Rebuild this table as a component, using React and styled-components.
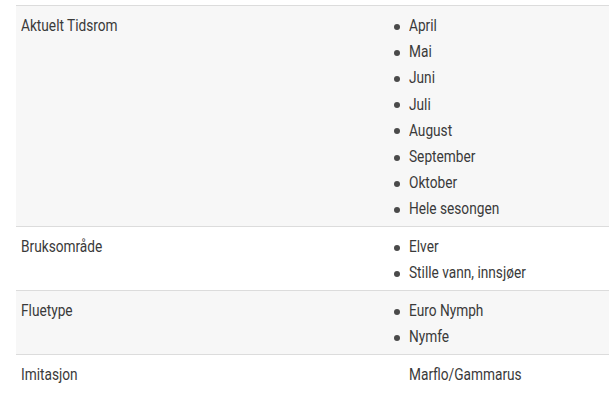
import React from 'react';
import styled, { createGlobalStyle } from 'styled-components';

const GlobalStyle = createGlobalStyle`
  html, body {
    margin: 0;
    padding: 0;
    background: #ffffff;
  }
  body {
    font-family: Roboto, "Liberation Sans", sans-serif;
    color: #3a3a3a;
  }
`;

const specs = [
  {
    label: 'Aktuelt Tidsrom',
    values: ['April', 'Mai', 'Juni', 'Juli', 'August', 'September', 'Oktober', 'Hele sesongen'],
  },
  { label: 'Bruksområde', values: ['Elver', 'Stille vann, innsjøer'] },
  { label: 'Fluetype', values: ['Euro Nymph', 'Nymfe'] },
  { label: 'Imitasjon', text: 'Marflo/Gammarus' },
];

const SpecTable = ({ rows }) => (
  <Table>
    {rows.map((row, i) => (
      <Row key={row.label} striped={i % 2 === 0}>
        <LabelCell>
          <Narrow>{row.label}</Narrow>
        </LabelCell>
        <ValueCell>
          {row.values ? (
            <List>
              {row.values.map((v) => (
                <Item key={v}>
                  <Narrow>{v}</Narrow>
                </Item>
              ))}
            </List>
          ) : (
            <Narrow>{row.text}</Narrow>
          )}
        </ValueCell>
      </Row>
    ))}
  </Table>
);

const App = () => (
  <>
    <GlobalStyle />
    <Page>
      <SpecTable rows={specs} />
    </Page>
  </>
);

const Page = styled.div`
  padding: 5px 1px 0 16px;
`;

const Table = styled.div`
  display: flex;
  flex-direction: column;
  border-top: 1px solid #dcdcdc;
`;

const Row = styled.div`
  display: grid;
  grid-template-columns: 376px 1fr;
  background-color: ${(p) => (p.striped ? '#f7f7f7' : '#ffffff')};
  border-bottom: 1px solid #dcdcdc;
  padding: 7px 0 3.5px;
  font-size: 16px;
  line-height: 26.2px;

  &:last-child {
    border-bottom: none;
  }
`;

const Narrow = styled.span`
  display: inline-block;
  white-space: nowrap;
  transform: scaleX(0.855);
  transform-origin: left center;
`;

const LabelCell = styled.div`
  padding-left: 5px;
`;

const ValueCell = styled.div`
  padding-left: 17px;
`;

const List = styled.ul`
  list-style: none;
  margin: 0;
  padding: 0;
`;

const Item = styled.li`
  position: relative;

  &::before {
    content: '';
    position: absolute;
    left: -15px;
    top: 10.5px;
    width: 6px;
    height: 6px;
    border-radius: 50%;
    background: #4a4a4a;
  }
`;

export default App;
